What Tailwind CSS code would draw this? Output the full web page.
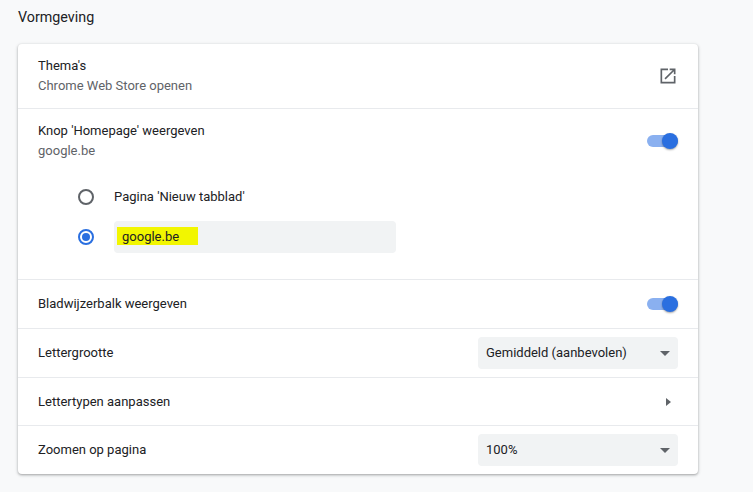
<!DOCTYPE html>
<html lang="nl">
<head>
    <meta charset="UTF-8">
    <title>Vormgeving</title>
    <script src="https://cdn.jsdelivr.net/npm/@tailwindcss/browser@4"></script>
</head>
<body class="bg-[#f8f9fa] text-[#202124] font-['Roboto',sans-serif] text-[13px] leading-[20px] h-[492px] w-[753px] overflow-hidden">
    <div class="w-[680px] ml-[18px]">
        <!-- Heading -->
        <h2 class="pt-[7px] pb-[17px] h-[44px] text-[14.3px] leading-[20px] font-normal">Vormgeving</h2>

        <div class="bg-white rounded-[4px] shadow-[0_1px_2px_rgba(60,64,67,0.3),0_1px_3px_1px_rgba(60,64,67,0.15)]">
            <!-- Thema's -->
            <div class="h-[64px] pl-[20px] pr-[20px] flex items-center justify-between">
                <div>
                    <div>Thema's</div>
                    <div class="text-[#5f6368]">Chrome Web Store openen</div>
                </div>
                <svg class="w-[20px] h-[20px] mb-[1px]" viewBox="0 0 24 24" fill="#5f6368">
                    <path d="M19 19H5V5h7V3H3v18h18v-9h-2v7zM14 3v2h3.59l-9.83 9.83 1.41 1.41L19 6.41V10h2V3h-7z"/>
                </svg>
            </div>

            <!-- Homepage -->
            <div class="h-[171px] border-t border-[#e8eaed] pl-[20px] pr-[20px]">
                <div class="h-[63px] flex items-center justify-between">
                    <div>
                        <div>Knop 'Homepage' weergeven</div>
                        <div class="text-[#5f6368]">google.be</div>
                    </div>
                    <div class="relative w-[31px] h-[12px] rounded-full bg-[#8ab0f0]">
                        <span class="absolute right-0 top-[-2px] w-[16px] h-[16px] rounded-full bg-[#2a6fe0] shadow-[0_1px_2px_rgba(0,0,0,0.35)]"></span>
                    </div>
                </div>
                <div class="pl-[40px]">
                    <div class="h-[50px] flex items-center gap-[20px]">
                        <span class="w-[16px] h-[16px] rounded-full border-2 border-[#5f6368]"></span>
                        <span>Pagina 'Nieuw tabblad'</span>
                    </div>
                    <div class="flex items-center gap-[20px] mt-[-1px]">
                        <span class="w-[16px] h-[16px] rounded-full border-2 border-[#2a6fe0] flex items-center justify-center">
                            <span class="w-[8px] h-[8px] rounded-full bg-[#2a6fe0]"></span>
                        </span>
                        <div class="w-[282px] h-[32px] rounded-[4px] bg-[#f1f3f4] flex items-center pl-[3px]">
                            <span class="bg-[#f2f600] h-[18px] w-[81px] pl-[5px] mb-[3px] leading-[19px]">google.be</span>
                        </div>
                    </div>
                </div>
            </div>

            <!-- Bladwijzerbalk -->
            <div class="h-[49px] border-t border-[#e8eaed] px-[20px] flex items-center justify-between">
                <span>Bladwijzerbalk weergeven</span>
                <div class="relative w-[31px] h-[12px] rounded-full bg-[#8ab0f0]">
                    <span class="absolute right-0 top-[-2px] w-[16px] h-[16px] rounded-full bg-[#2a6fe0] shadow-[0_1px_2px_rgba(0,0,0,0.35)]"></span>
                </div>
            </div>

            <!-- Lettergrootte -->
            <div class="h-[49px] border-t border-[#e8eaed] px-[20px] flex items-center justify-between">
                <span>Lettergrootte</span>
                <div class="w-[200px] h-[32px] rounded-[4px] bg-[#f1f3f4] flex items-center justify-between pl-[8px] pr-[8px]">
                    <span>Gemiddeld (aanbevolen)</span>
                    <span class="w-0 h-0 border-x-[5px] border-x-transparent border-t-[5px] border-t-[#5f6368]"></span>
                </div>
            </div>

            <!-- Lettertypen -->
            <div class="h-[48px] border-t border-[#e8eaed] px-[20px] flex items-center justify-between">
                <span>Lettertypen aanpassen</span>
                <span class="w-0 h-0 mr-[7px] border-y-[4.5px] border-y-transparent border-l-[5px] border-l-[#5f6368]"></span>
            </div>

            <!-- Zoomen -->
            <div class="h-[49px] border-t border-[#e8eaed] px-[20px] flex items-center justify-between">
                <span>Zoomen op pagina</span>
                <div class="w-[200px] h-[32px] rounded-[4px] bg-[#f1f3f4] flex items-center justify-between pl-[8px] pr-[8px]">
                    <span>100%</span>
                    <span class="w-0 h-0 border-x-[5px] border-x-transparent border-t-[5px] border-t-[#5f6368]"></span>
                </div>
            </div>
        </div>
    </div>
</body>
</html>
